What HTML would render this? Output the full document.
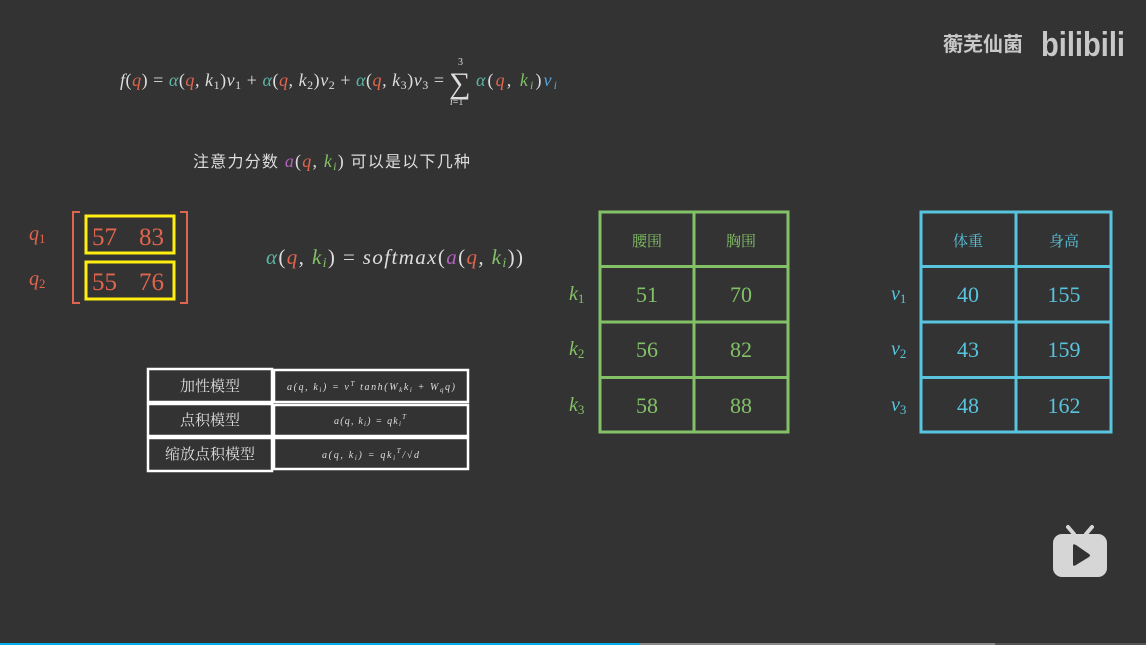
<!DOCTYPE html>
<html><head><meta charset="utf-8"><style>
html,body{margin:0;padding:0;background:#333;}
svg{display:block}
.m{font-family:"Liberation Serif",serif;font-style:italic}
.r{font-family:"Liberation Serif",serif}
.c{font-family:"Liberation Serif","Noto Serif CJK SC",serif}
.s{font-family:"Liberation Sans","Noto Sans CJK SC",sans-serif}
</style></head><body>
<svg width="1146" height="645" viewBox="0 0 1146 645" xmlns="http://www.w3.org/2000/svg">
<rect width="1146" height="645" fill="#333"/>
<!-- top formula -->
<text x="120" y="86" font-size="18" fill="#ddd" class="m" textLength="324" lengthAdjust="spacing">f<tspan class="r" font-style="normal">(</tspan><tspan fill="#e0654e">q</tspan><tspan class="r" font-style="normal">) = </tspan><tspan fill="#5cb5a5">α</tspan><tspan class="r" font-style="normal">(</tspan><tspan fill="#e0654e">q</tspan>, k<tspan font-size="12" class="r" font-style="normal" dy="3">1</tspan><tspan class="r" font-style="normal" dy="-3">)</tspan>v<tspan font-size="12" class="r" font-style="normal" dy="3">1</tspan><tspan class="r" font-style="normal" dy="-3"> + </tspan><tspan fill="#5cb5a5">α</tspan><tspan class="r" font-style="normal">(</tspan><tspan fill="#e0654e">q</tspan>, k<tspan font-size="12" class="r" font-style="normal" dy="3">2</tspan><tspan class="r" font-style="normal" dy="-3">)</tspan>v<tspan font-size="12" class="r" font-style="normal" dy="3">2</tspan><tspan class="r" font-style="normal" dy="-3"> + </tspan><tspan fill="#5cb5a5">α</tspan><tspan class="r" font-style="normal">(</tspan><tspan fill="#e0654e">q</tspan>, k<tspan font-size="12" class="r" font-style="normal" dy="3">3</tspan><tspan class="r" font-style="normal" dy="-3">)</tspan>v<tspan font-size="12" class="r" font-style="normal" dy="3">3</tspan><tspan class="r" font-style="normal" dy="-3"> =</tspan></text>
<text x="449" y="93" font-size="30" fill="#ddd" class="r">∑</text>
<text x="458" y="65" font-size="10" fill="#ddd" class="r">3</text>
<text x="450" y="105" font-size="10" fill="#ddd" class="m">i<tspan class="r" font-style="normal">=1</tspan></text>
<text x="476" y="86" font-size="18" fill="#5cb5a5" class="m" textLength="81" lengthAdjust="spacing">α<tspan fill="#ddd" class="r" font-style="normal">(</tspan><tspan fill="#e0654e">q</tspan><tspan fill="#ddd">, </tspan><tspan fill="#83c167">k<tspan font-size="12" dy="3">i</tspan></tspan><tspan fill="#ddd" class="r" font-style="normal" dy="-3">)</tspan><tspan fill="#58a4d8">v<tspan font-size="12" dy="3">i</tspan></tspan></text>
<!-- subtitle -->
<text x="193" y="167" font-size="16" fill="#ddd" class="s" textLength="277" lengthAdjust="spacing">注意力分数 <tspan class="m" fill="#b35fbf" font-size="18">a</tspan><tspan class="r" font-size="18">(</tspan><tspan class="m" fill="#e0654e" font-size="18">q</tspan><tspan class="r" font-size="18">, </tspan><tspan class="m" fill="#83c167" font-size="18">k<tspan font-size="12" dy="3">i</tspan></tspan><tspan class="r" font-size="18" dy="-3">)</tspan> 可以是以下几种</text>
<!-- matrix -->
<text x="29" y="240" font-size="20" fill="#e0654e" class="m">q<tspan font-size="13" class="r" font-style="normal" dy="3">1</tspan></text>
<text x="29" y="285" font-size="20" fill="#e0654e" class="m">q<tspan font-size="13" class="r" font-style="normal" dy="3">2</tspan></text>
<path d="M80 212 H73 V303 H80 M180 212 H187 V303 H180" fill="none" stroke="#e0654e" stroke-width="2"/>
<rect x="86" y="216" width="88" height="37" fill="none" stroke="#ffee10" stroke-width="3"/>
<rect x="86" y="262" width="88" height="37" fill="none" stroke="#ffee10" stroke-width="3"/>
<text x="92" y="245" font-size="25" fill="#e0654e" class="r">57</text>
<text x="139" y="245" font-size="25" fill="#e0654e" class="r">83</text>
<text x="92" y="290" font-size="25" fill="#e0654e" class="r">55</text>
<text x="139" y="290" font-size="25" fill="#e0654e" class="r">76</text>
<!-- softmax -->
<text x="266" y="264" font-size="21" fill="#ddd" class="m" textLength="257" lengthAdjust="spacing"><tspan fill="#5cb5a5">α</tspan><tspan class="r" font-style="normal">(</tspan><tspan fill="#e0654e">q</tspan>, <tspan fill="#83c167">k<tspan font-size="14" dy="3">i</tspan></tspan><tspan class="r" font-style="normal" dy="-3">) = </tspan>softmax<tspan class="r" font-style="normal">(</tspan><tspan fill="#b35fbf">a</tspan><tspan class="r" font-style="normal">(</tspan><tspan fill="#e0654e">q</tspan>, <tspan fill="#83c167">k<tspan font-size="14" dy="3">i</tspan></tspan><tspan class="r" font-style="normal" dy="-3">))</tspan></text>
<!-- small table -->
<g fill="none" stroke="#fff" stroke-width="2.5">
<rect x="148" y="369" width="124" height="33"/>
<rect x="148" y="404" width="124" height="32"/>
<rect x="148" y="438" width="124" height="33"/>
<rect x="274" y="370" width="194" height="32"/>
<rect x="274" y="405" width="194" height="31"/>
<rect x="274" y="438" width="194" height="31"/>
</g>
<g font-size="15" fill="#ddd" class="c" text-anchor="middle">
<text x="210" y="391">加性模型</text>
<text x="210" y="425">点积模型</text>
<text x="210" y="459">缩放点积模型</text>
</g>
<g font-size="10" fill="#ddd" class="m">
<text x="287" y="390" textLength="168" lengthAdjust="spacing">a(q, k<tspan font-size="7" dy="2">i</tspan><tspan dy="-2">) = v</tspan><tspan font-size="7" dy="-4">T</tspan><tspan dy="4"> tanh(W</tspan><tspan font-size="7" dy="2">k</tspan><tspan dy="-2">k</tspan><tspan font-size="7" dy="2">i</tspan><tspan dy="-2"> + W</tspan><tspan font-size="7" dy="2">q</tspan><tspan dy="-2">q)</tspan></text>
<text x="334" y="424" textLength="72" lengthAdjust="spacing">a(q, k<tspan font-size="7" dy="2">i</tspan><tspan dy="-2">) = qk</tspan><tspan font-size="7" dy="2">i</tspan><tspan font-size="7" dy="-7">T</tspan></text>
<text x="322" y="458" textLength="97" lengthAdjust="spacing">a(q, k<tspan font-size="7" dy="2">i</tspan><tspan dy="-2">) = qk</tspan><tspan font-size="7" dy="2">i</tspan><tspan font-size="7" dy="-7">T</tspan><tspan dy="5">/√d</tspan></text>
</g>
<!-- green table -->
<g fill="none" stroke="#83c167" stroke-width="3">
<rect x="600" y="212" width="188" height="220"/>
<path d="M694 212 V432 M600 266.5 H788 M600 322 H788 M600 377.5 H788"/>
</g>
<g fill="#83c167" text-anchor="middle">
<text x="647" y="246" font-size="15" class="c">腰围</text>
<text x="741" y="246" font-size="15" class="c">胸围</text>
<g font-size="22" class="r">
<text x="647" y="302">51</text><text x="741" y="302">70</text>
<text x="647" y="357">56</text><text x="741" y="357">82</text>
<text x="647" y="413">58</text><text x="741" y="413">88</text>
</g>
</g>
<g fill="#83c167" font-size="20" class="m">
<text x="569" y="300">k<tspan font-size="13" class="r" font-style="normal" dy="3">1</tspan></text>
<text x="569" y="355">k<tspan font-size="13" class="r" font-style="normal" dy="3">2</tspan></text>
<text x="569" y="411">k<tspan font-size="13" class="r" font-style="normal" dy="3">3</tspan></text>
</g>
<!-- blue table -->
<g fill="none" stroke="#58c4dd" stroke-width="3">
<rect x="921" y="212" width="190" height="220"/>
<path d="M1016 212 V432 M921 266.5 H1111 M921 322 H1111 M921 377.5 H1111"/>
</g>
<g fill="#58c4dd" text-anchor="middle">
<text x="968" y="246" font-size="15" class="c">体重</text>
<text x="1064" y="246" font-size="15" class="c">身高</text>
<g font-size="22" class="r">
<text x="968" y="302">40</text><text x="1064" y="302">155</text>
<text x="968" y="357">43</text><text x="1064" y="357">159</text>
<text x="968" y="413">48</text><text x="1064" y="413">162</text>
</g>
</g>
<g fill="#58c4dd" font-size="20" class="m">
<text x="891" y="300">v<tspan font-size="13" class="r" font-style="normal" dy="3">1</tspan></text>
<text x="891" y="355">v<tspan font-size="13" class="r" font-style="normal" dy="3">2</tspan></text>
<text x="891" y="411">v<tspan font-size="13" class="r" font-style="normal" dy="3">3</tspan></text>
</g>
<!-- watermark -->
<text x="943" y="51" font-size="20" font-weight="bold" fill="#c8c8c8" class="s">蘅芜仙菌</text>
<text x="1041" y="56" font-size="34" font-weight="bold" fill="#c8c8c8" class="s" textLength="84" lengthAdjust="spacingAndGlyphs">bilibili</text>
<!-- tv icon -->
<path d="M1068 527 L1074 534 M1092 527 L1086 534" stroke="#d6d6d6" stroke-width="4" stroke-linecap="round"/>
<rect x="1053" y="534" width="54" height="43" rx="9" fill="#d6d6d6"/>
<path d="M1073 546 L1073 564 Q1073 567 1076 565 L1089 557 Q1091 555 1089 554 L1076 545 Q1073 543 1073 546Z" fill="#333"/>
<!-- progress bar -->
<rect x="0" y="643" width="640" height="2" fill="#00aeec"/>
<rect x="640" y="643" width="355" height="2" fill="#8a8a8a"/>
<rect x="995" y="643" width="151" height="2" fill="#555"/>
</svg>
</body></html>
